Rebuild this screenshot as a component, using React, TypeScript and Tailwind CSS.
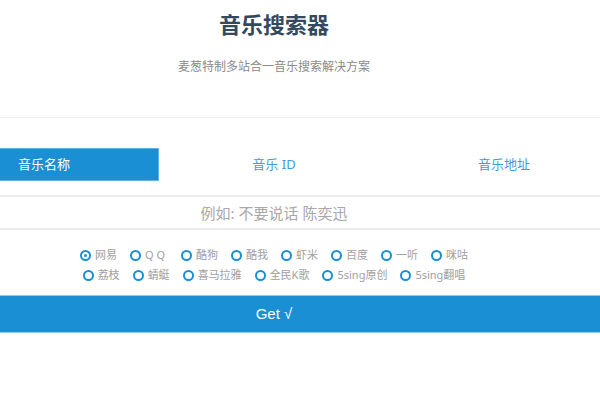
import { useState } from "react";

const sites = [
  ["netease", "网易"],
  ["qq", "QQ"],
  ["kugou", "酷狗"],
  ["kuwo", "酷我"],
  ["xiami", "虾米"],
  ["baidu", "百度"],
  ["1ting", "一听"],
  ["migu", "咪咕"],
];

const sites2 = [
  ["lizhi", "荔枝"],
  ["qingting", "蜻蜓"],
  ["ximalaya", "喜马拉雅"],
  ["kg", "全民K歌"],
  ["5singyc", "5sing原创"],
  ["5singfc", "5sing翻唱"],
];

function Radio({ label, checked, onClick }: { label: string; checked: boolean; onClick: () => void }) {
  return (
    <label className="flex cursor-pointer items-center gap-[4px]" onClick={onClick}>
      <span className="flex h-[11px] w-[11px] items-center justify-center rounded-full border-2 border-[#1a8fd4]">
        {checked && <span className="h-[3px] w-[3px] rounded-full bg-[#1a8fd4]" />}
      </span>
      <span className={label === "QQ" ? "text-[11px] tracking-[3px] text-[#a0a0a0]" : "text-[11px] text-[#a0a0a0]"}>
        {label}
      </span>
    </label>
  );
}

export default function App() {
  const [tab, setTab] = useState(0);
  const [site, setSite] = useState("netease");

  const tabs = ["音乐名称", "音乐 ID", "音乐地址"];

  return (
    <div className="h-[400px] w-[600px] overflow-hidden bg-white font-['Noto_Sans','Noto_Sans_CJK_SC',sans-serif]">
      <div className="ml-[-71px] flex w-[690px] flex-col">
        {/* header */}
        <div className="flex h-[117px] flex-col items-center">
          <h1 className="pt-[11px] text-[22px] leading-[26px] font-bold text-[#34495e]">音乐搜索器</h1>
          <p className="mt-[22px] text-[12px] leading-[16px] text-[#8a8a8a]">麦葱特制多站合一音乐搜索解决方案</p>
        </div>

        {/* tabs */}
        <div className="grid grid-cols-3 border-t border-[#f0f0f0] pt-[30px] pb-[14px]">
          {tabs.map((t, i) => (
            <button
              key={t}
              onClick={() => setTab(i)}
              className={
                i === tab
                  ? "h-[33px] border border-[#5fb1e4] bg-[#1a8fd4] text-[13px] text-white"
                  : "h-[33px] border border-transparent text-[13px] text-[#3f9be0]"
              }
            >
              {t}
            </button>
          ))}
        </div>

        {/* input */}
        <div className="border-y-2 border-[#ececec]">
          <input
            className="h-[31px] w-full bg-white text-center text-[15px] text-[#555] outline-none placeholder:text-[#a8a8a8]"
            placeholder="例如: 不要说话 陈奕迅"
          />
        </div>

        {/* sites */}
        <div className="flex flex-col items-center pt-[15px] pb-[10px]">
          <div className="flex h-[20px] items-center gap-[13px]">
            {sites.map(([k, v]) => (
              <Radio key={k} label={v} checked={site === k} onClick={() => setSite(k)} />
            ))}
          </div>
          <div className="flex h-[20px] items-center gap-[13px]">
            {sites2.map(([k, v]) => (
              <Radio key={k} label={v} checked={site === k} onClick={() => setSite(k)} />
            ))}
          </div>
        </div>

        <button className="h-[38px] border-y border-[#8fcbed] bg-[#1a8fd4] font-['Liberation_Sans',sans-serif] text-[15px] text-white">
          Get √
        </button>
      </div>
    </div>
  );
}
